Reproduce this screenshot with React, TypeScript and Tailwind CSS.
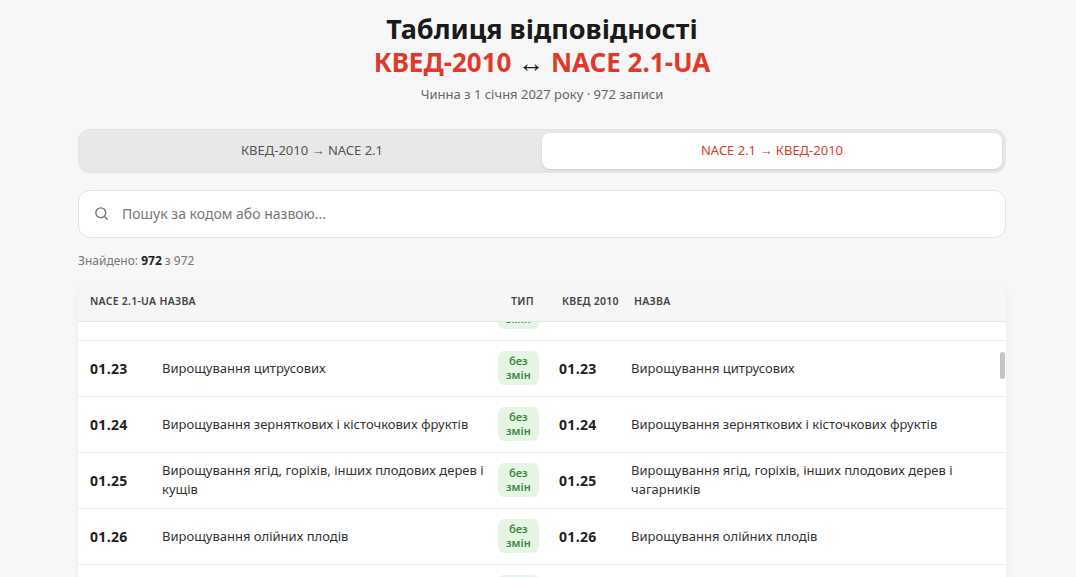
import React from "react";

const rows = [
  { code: "01.22", name: "Вирощування тропічних і субтропічних фруктів", kved: "01.22", kname: "Вирощування тропічних і субтропічних фруктів" },
  { code: "01.23", name: "Вирощування цитрусових", kved: "01.23", kname: "Вирощування цитрусових" },
  { code: "01.24", name: "Вирощування зерняткових і кісточкових фруктів", kved: "01.24", kname: "Вирощування зерняткових і кісточкових фруктів" },
  { code: "01.25", name: "Вирощування ягід, горіхів, інших плодових дерев і кущів", kved: "01.25", kname: "Вирощування ягід, горіхів, інших плодових дерев і чагарників" },
  { code: "01.26", name: "Вирощування олійних плодів", kved: "01.26", kname: "Вирощування олійних плодів" },
  { code: "01.27", name: "Вирощування культур для виробництва напоїв", kved: "01.27", kname: "Вирощування культур для виробництва напоїв" },
];

function Row({ r }: { r: (typeof rows)[number] }) {
  return (
    <div className="flex items-center h-[56px] border-b border-[#ececec] text-[13px] text-[#333]">
      <div className="w-[84px] pl-[12px] font-bold text-[14px] text-[#222] tracking-wide">{r.code}</div>
      <div className="w-[336px] pr-3 leading-[19px]">{r.name}</div>
      <div className="w-[61px] flex justify-start">
        <span className="bg-[#e6f4e6] text-[#3f8a3f] font-semibold text-[11px] leading-[14px] rounded-md px-[8px] py-[3px] text-center">
          без<br />змін
        </span>
      </div>
      <div className="w-[72px] font-bold text-[14px] text-[#222] tracking-wide">{r.kved}</div>
      <div className="flex-1 pr-6 leading-[19px]">{r.kname}</div>
    </div>
  );
}

export default function App() {
  return (
    <div className="bg-[#f7f7f7] font-['Inter',sans-serif] overflow-hidden h-[577px]">
      <div className="w-[928px] ml-[78px] pt-[12px]">
        <div className="text-center">
          <h1 className="text-[27px] font-bold text-[#1a1a1a] leading-[34px]">Таблиця відповідності</h1>
          <div className="text-[26px] font-bold text-[#e0392b] leading-[32px]">
            КВЕД-2010 <span className="text-[#1a1a1a] font-normal">↔</span> NACE 2.1-UA
          </div>
          <p className="text-[13px] text-[#666] mt-[7px]">Чинна з 1 січня 2027 року · 972 записи</p>
        </div>

        <div className="mt-[24px] bg-[#e8e8e8] rounded-xl p-[3px] flex h-[44px] border border-[#e2e2e2]">
          <div className="flex-1 flex items-center justify-center text-[13px] text-[#555]">КВЕД-2010 → NACE 2.1</div>
          <div className="flex-1 flex items-center justify-center text-[13px] text-[#e0392b] bg-white rounded-lg shadow-sm">NACE 2.1 → КВЕД-2010</div>
        </div>

        <div className="mt-[17px] h-[48px] bg-white border border-[#e3e3e3] rounded-xl flex items-center px-[14px] gap-[12px]">
          <svg width="17" height="17" viewBox="0 0 24 24" fill="none" stroke="#777" strokeWidth="2" strokeLinecap="round">
            <circle cx="11" cy="11" r="7" />
            <path d="M20 20l-4-4" />
          </svg>
          <span className="text-[14px] text-[#777]">Пошук за кодом або назвою...</span>
        </div>

        <p className="mt-[14px] text-[12px] text-[#777]">
          Знайдено: <b className="text-[#222]">972</b> з 972
        </p>

        <div className="mt-[14px] bg-white rounded-t-xl shadow-[0_1px_6px_rgba(0,0,0,0.06)] relative">
          <div className="flex items-center h-[38px] bg-[#f6f6f6] rounded-t-xl border-b border-[#e6e6e6] text-[10.5px] font-semibold text-[#444] tracking-wide">
            <div className="w-[420px] pl-[12px]">NACE 2.1-UA НАЗВА</div>
            <div className="w-[64px] pl-[13px]">ТИП</div>
            <div className="w-[72px]">КВЕД 2010</div>
            <div>НАЗВА</div>
          </div>
          <div className="h-[260px] overflow-hidden relative">
            <div className="-mt-[37px]">
              {rows.map((r) => (
                <Row key={r.code} r={r} />
              ))}
            </div>
            <div className="absolute right-[1px] top-[30px] w-[5px] h-[27px] rounded bg-[#c4c4c4]" />
          </div>
        </div>
      </div>
    </div>
  );
}
